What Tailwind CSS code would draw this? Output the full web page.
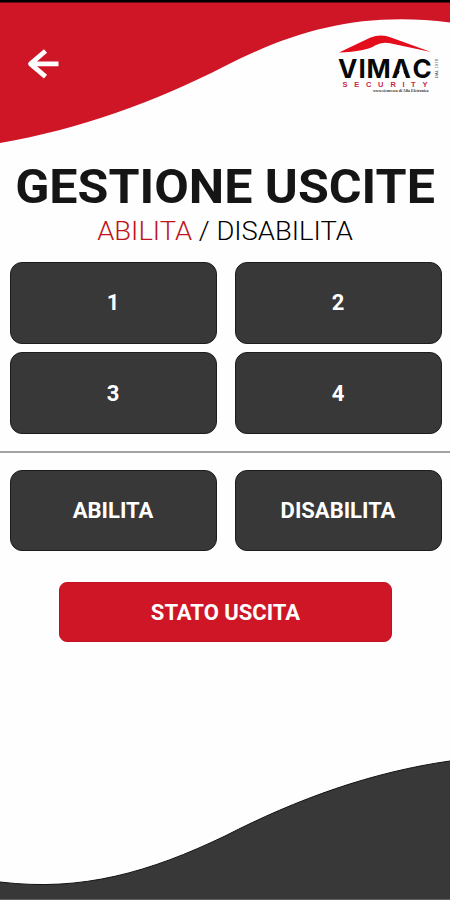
<!DOCTYPE html>
<html lang="it">
<head>
<meta charset="utf-8">
<meta name="viewport" content="width=device-width, initial-scale=1">
<title>Gestione uscite</title>
<script src="https://cdn.jsdelivr.net/npm/@tailwindcss/browser@4"></script>
</head>
<body class="bg-white">
<main class="relative isolate flex h-[900px] w-[450px] flex-col overflow-hidden bg-[#fefefe] font-['Roboto',sans-serif] text-[#151515]">
  <!-- Decorative waves -->
  <svg class="absolute inset-0 -z-10" width="450" height="900" viewBox="0 0 450 900" aria-hidden="true">
    <path d="M0 0H450V22.500C365 12 300 28 225 66C155 102 80 129 0 143Z" fill="#cf1626"/>
    <path d="M0 0H450V2.5H0Z" fill="#000"/>
    <path d="M0 882C82 892 150 872 225 836C297 799 372 772 450 761V900H0Z" fill="#383838"/>
    <path d="M0 882C82 892 150 872 225 836C297 799 372 772 450 761" fill="none" stroke="#111" stroke-width="1"/>
    <path d="M0 899.5H450" stroke="#606060"/>
  </svg>

  <header class="flex h-[160px] items-start justify-between pt-[34px] pr-[9px] pl-[26px]">
    <button class="mt-[14px]" aria-label="Indietro">
      <svg width="34" height="32" viewBox="0 0 34 32" fill="none" stroke="#fff" stroke-width="4.800" stroke-linejoin="round"><path d="M19.500 3L4.500 15.800L19.500 28.600M4.500 15.800H32.500" /></svg>
    </button>
    <svg width="106" height="62" viewBox="335 34 106 62" role="img" aria-label="Vimac Security">
      <path d="M339 52.500L370 37.800Q381 33.200 391 37.500L431 52L390 43.300Q382 41.500 375 45.500Q366 51.500 339 52.500Z" fill="#e40d1c"/>
      <text x="338 358.500 366.500 391.500 412.500" y="78" font-family="Inter" font-size="26" font-weight="700" fill="#080808">VIMAC</text>
      <!-- The wordmark's A has no crossbar -->
      <path d="M401.500 65L397.200 78.500H405.800Z" fill="#fefefe"/>
      <text x="342.500 354.200 366 378 390.500 402.500 411 422.500" y="86.700" font-family="Liberation Sans" font-size="7.500" font-weight="700" fill="#c92745">SECURITY</text>
      <text x="373" y="92.300" textLength="55.500" lengthAdjust="spacingAndGlyphs" font-family="Liberation Serif" font-size="4.500" font-weight="700" fill="#333">www.sicurezza di Alfa Eletronica</text>
      <text transform="translate(437.500 78) rotate(-90)" textLength="19" font-family="Liberation Sans" font-size="4" fill="#444">DAL 1978</text>
    </svg>
  </header>

  <h1 class="flex h-[54px] scale-x-[1.045] items-center justify-center text-[48px] leading-none font-bold whitespace-nowrap">GESTIONE USCITE</h1>
  <p class="flex h-[33px] scale-x-[1.053] items-center justify-center pt-px text-[26px] leading-none font-light whitespace-pre text-black"><span class="text-[#bd1420]">ABILITA</span> / DISABILITA</p>

  <section class="mt-[15px] grid grid-cols-2 gap-x-[18px] gap-y-[8px] pr-[8.500px] pl-[9.500px] text-[22px] font-bold text-white">
    <button class="h-[82px] rounded-xl border border-[#1c1c1c] bg-[#383838] pb-px">1</button>
    <button class="h-[82px] rounded-xl border border-[#1c1c1c] bg-[#383838] pb-px">2</button>
    <button class="h-[82px] rounded-xl border border-[#1c1c1c] bg-[#383838]">3</button>
    <button class="h-[82px] rounded-xl border border-[#1c1c1c] bg-[#383838]">4</button>
  </section>

  <hr class="mt-[16.500px] h-[2px] shrink-0 border-0 bg-[#a3a3a3]">

  <section class="mt-[17.500px] grid grid-cols-2 gap-x-[18px] pr-[8.500px] pl-[9.500px] text-[22px] font-bold text-white">
    <button class="h-[81px] rounded-xl border border-[#1c1c1c] bg-[#383838]">ABILITA</button>
    <button class="h-[81px] rounded-xl border border-[#1c1c1c] bg-[#383838]">DISABILITA</button>
  </section>

  <button class="mt-[31px] ml-[59px] h-[60px] w-[333px] rounded-lg border border-[#c21222] bg-[#cf1626] text-[22px] font-bold text-white">STATO USCITA</button>
</main>
</body>
</html>
